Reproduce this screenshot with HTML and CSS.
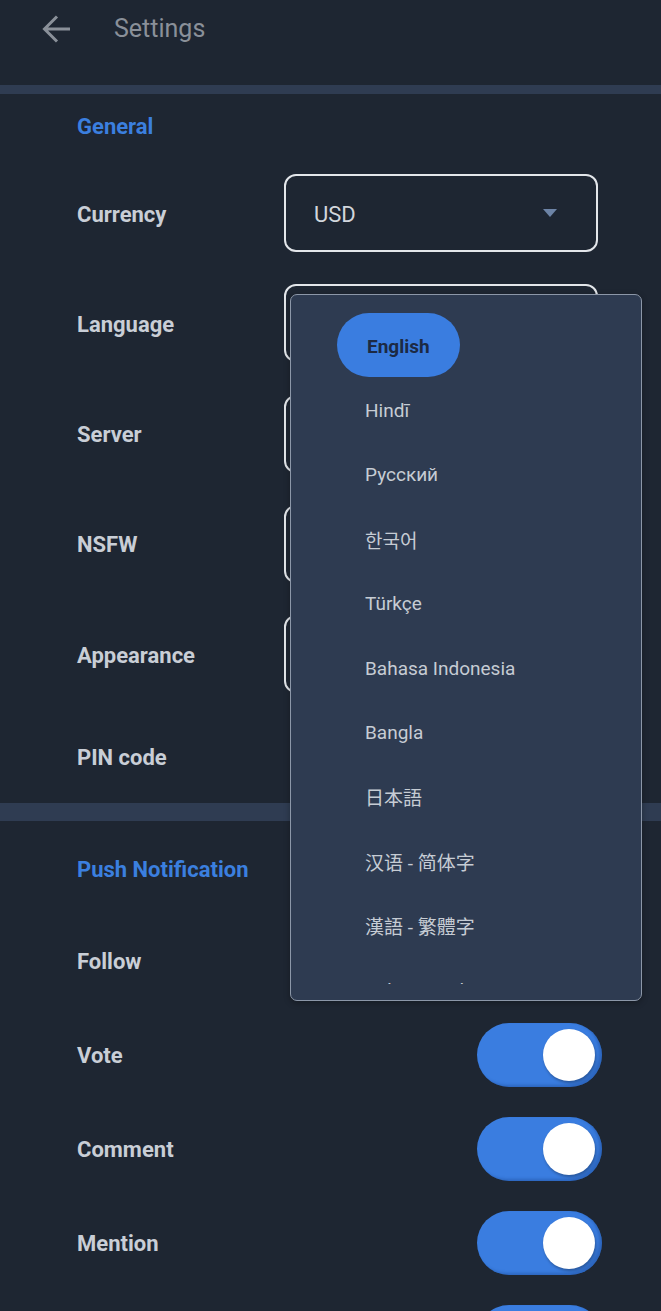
FILE: index.html
```html
<!DOCTYPE html>
<html lang="en">
<head>
<meta charset="utf-8">
<title>Settings</title>
<link rel="stylesheet" href="styles.css">
</head>
<body>
<div class="page">
  <header class="topbar">
    <svg class="back" viewBox="0 0 30 30" width="30" height="30" aria-hidden="true">
      <path d="M28 15H3.5M15 2.5L2.5 15 15 27.5" fill="none" stroke="#8a9099" stroke-width="3" stroke-linecap="butt" stroke-linejoin="miter"/>
    </svg>
    <span class="title">Settings</span>
  </header>
  <div class="divider thin"></div>

  <section class="section general">
    <h2 class="section-title">General</h2>
    <div class="rows">
      <div class="row"><span class="label">Currency</span>
        <div class="select"><span class="value">USD</span><span class="caret"></span></div></div>
      <div class="row"><span class="label">Language</span>
        <div class="select"><span class="value"></span><span class="caret"></span></div></div>
      <div class="row"><span class="label">Server</span>
        <div class="select"><span class="value"></span><span class="caret"></span></div></div>
      <div class="row"><span class="label">NSFW</span>
        <div class="select"><span class="value"></span><span class="caret"></span></div></div>
      <div class="row"><span class="label">Appearance</span>
        <div class="select"><span class="value"></span><span class="caret"></span></div></div>
    </div>
    <div class="trow pin"><span class="label">PIN code</span><span class="toggle"><span class="knob"></span></span></div>
  </section>
  <div class="divider thick"></div>

  <section class="section push">
    <h2 class="section-title">Push Notification</h2>
    <div class="trows">
      <div class="trow"><span class="label">Follow</span><span class="toggle"><span class="knob"></span></span></div>
      <div class="trow"><span class="label">Vote</span><span class="toggle"><span class="knob"></span></span></div>
      <div class="trow"><span class="label">Comment</span><span class="toggle"><span class="knob"></span></span></div>
      <div class="trow"><span class="label">Mention</span><span class="toggle"><span class="knob"></span></span></div>
      <div class="trow"><span class="label"></span><span class="toggle"><span class="knob"></span></span></div>
    </div>
  </section>

  <div class="menu">
    <ul class="menu-list">
      <li class="item selected"><span class="pill">English</span></li>
      <li class="item">Hindī</li>
      <li class="item">Русский</li>
      <li class="item cjk-kr">한국어</li>
      <li class="item">Türkçe</li>
      <li class="item">Bahasa Indonesia</li>
      <li class="item">Bangla</li>
      <li class="item cjk-jp">日本語</li>
      <li class="item cjk-sc">汉语 - 简体字</li>
      <li class="item cjk-tc">漢語 - 繁體字</li>
      <li class="item">Bahasa Melayu</li>
    </ul>
  </div>
</div>
</body>
</html>
```

FILE: styles.css
```css
* { box-sizing: border-box; }
html, body {
  margin: 0;
  padding: 0;
  background: #1e2632;
}
body {
  font-family: Roboto, "Noto Sans", "Noto Sans CJK SC", sans-serif;
  color: #c9ced6;
  overflow: hidden;
  height: 1311px;
}
.page {
  position: relative;
  width: 661px;
  height: 1311px;
  overflow: hidden;
}
.topbar {
  height: 85px;
  display: flex;
  align-items: flex-start;
  padding: 14px 0 0 42px;
}
.back { display: block; flex: none; }
.title {
  margin-left: 42px;
  font-size: 25px;
  line-height: 30px;
  color: #8a9099;
  font-weight: 400;
}
.divider { background: #2f3c52; }
.divider.thin { height: 9px; }
.divider.thick { height: 18px; }

.section { padding-left: 77px; padding-right: 59px; }
.section-title {
  margin: 0;
  font-size: 22px;
  line-height: 30px;
  font-weight: 700;
  color: #3b7fdf;
}
.general { padding-top: 18px; padding-bottom: 14px; }
.general .section-title { margin-bottom: 32px; }
.rows { display: flex; flex-direction: column; gap: 32.25px; }
.row {
  display: grid;
  grid-template-columns: 207px 314px;
  align-items: center;
  height: 78px;
}
.row .label { padding-top: 2px; }
.label {
  font-size: 22px;
  font-weight: 700;
  color: #c9ced6;
}
.select {
  height: 78px;
  border: 2px solid #e3e6ea;
  border-radius: 12px;
  display: flex;
  align-items: center;
  justify-content: space-between;
  padding: 0 39px 0 28px;
}
.value { font-size: 22px; color: #d2d6dc; padding-top: 2px; }
.caret {
  width: 0; height: 0;
  border-left: 7px solid transparent;
  border-right: 7px solid transparent;
  border-top: 8px solid #6d84a6;
}
.trow {
  display: flex;
  align-items: center;
  justify-content: space-between;
  height: 64px;
}
.pin { margin-top: 32px; }
.push { padding-top: 34px; }
.push .section-title { margin-bottom: 44px; }
.trows { display: flex; flex-direction: column; gap: 30px; }
.toggle {
  position: relative;
  width: 125px;
  height: 64px;
  border-radius: 32px;
  background: #3a7de0;
  box-shadow: inset -3px -2px 3px rgba(20, 60, 130, 0.35);
}
.knob {
  position: absolute;
  right: 7px;
  top: 6px;
  width: 52px;
  height: 52px;
  border-radius: 50%;
  background: #ffffff;
  box-shadow: 1px 2px 3px rgba(0, 0, 0, 0.3);
}

.menu {
  position: absolute;
  left: 290px;
  top: 294px;
  width: 352px;
  height: 707px;
  background: #2e3b51;
  border: 1px solid #8c97a8;
  border-radius: 7px;
  padding: 18px 0 16px;
  box-shadow: 0 2px 6px rgba(0, 0, 0, 0.3);
}
.menu-list {
  list-style: none;
  margin: 0;
  padding: 0;
  height: 671px;
  overflow: hidden;
}
.item {
  height: 64.4px;
  display: flex;
  align-items: center;
  padding-left: 74px;
  padding-top: 2px;
  font-size: 19px;
  color: #c6ccd4;
}
.item.selected { padding-left: 46px; padding-top: 0; }
.pill {
  height: 64px;
  padding: 3px 30px 0;
  border-radius: 32px;
  background: #3a7de0;
  display: flex;
  align-items: center;
  font-weight: 700;
  font-size: 19px;
  color: #1c2a44;
}
.cjk-kr { font-family: Roboto, "Noto Sans CJK KR", sans-serif; }
.cjk-jp { font-family: Roboto, "Noto Sans CJK JP", sans-serif; }
.cjk-sc { font-family: Roboto, "Noto Sans CJK SC", sans-serif; }
.cjk-tc { font-family: Roboto, "Noto Sans CJK TC", sans-serif; }
```
